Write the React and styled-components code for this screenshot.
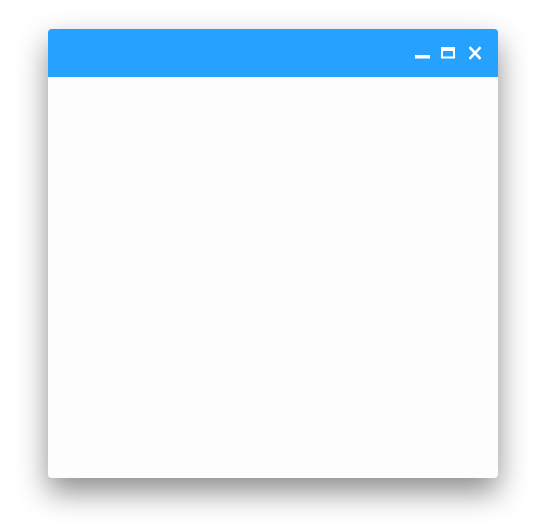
import styled, { createGlobalStyle } from "styled-components";

const GlobalStyle = createGlobalStyle`
    html, body {
        margin: 0;
        padding: 0;
        background: #ffffff;
        font-family: "Roboto", "Liberation Sans", sans-serif;
    }
`

const Page = styled.div`
    width: 542px;
    height: 522px;
    padding: 29px 0 0 48px;
    box-sizing: border-box;
`

const Window = styled.div`
    width: 450px;
    height: 449px;
    border-radius: 4px;
    background: #fdfdfd;
    overflow: hidden;
    box-shadow: 0 14px 30px rgba(0, 0, 0, 0.45);
    display: flex;
    flex-direction: column;
`

const TitleBar = styled.div`
    height: 48px;
    flex-shrink: 0;
    background: #26a1fd;
    display: flex;
    align-items: center;
    justify-content: flex-end;
    padding-right: 17px;
`

const Control = styled.button`
    border: none;
    background: none;
    padding: 0;
    margin-left: ${(p) => p.$gap || 0}px;
    display: flex;
    align-items: center;
    justify-content: center;
    width: ${(p) => p.$w}px;
    height: 14px;
    cursor: pointer;
`

const Body = styled.div`
    flex: 1;
`

const App = () => {
    return <>
    <GlobalStyle />
    <Page>
        <Window>
            <TitleBar>
                <Control $w={15} aria-label="Minimize">
                    <svg width="15" height="14" viewBox="0 0 15 14">
                        <rect x="0" y="9" width="15" height="3.5" fill="#fff" />
                    </svg>
                </Control>
                <Control $w={14} $gap={11} aria-label="Maximize">
                    <svg width="14" height="14" viewBox="0 0 14 14">
                        <rect x="1" y="2" width="12" height="9.5" fill="none" stroke="#fff" strokeWidth="2" />
                        <rect x="1" y="2" width="12" height="3" fill="#fff" />
                    </svg>
                </Control>
                <Control $w={12} $gap={14} aria-label="Close">
                    <svg width="12" height="14" viewBox="0 0 12 14">
                        <path d="M1.3 2 L10.7 12 M10.7 2 L1.3 12" stroke="#fff" strokeWidth="2.6" strokeLinecap="square" />
                    </svg>
                </Control>
            </TitleBar>
            <Body />
        </Window>
    </Page>
    </>
}

export default App
